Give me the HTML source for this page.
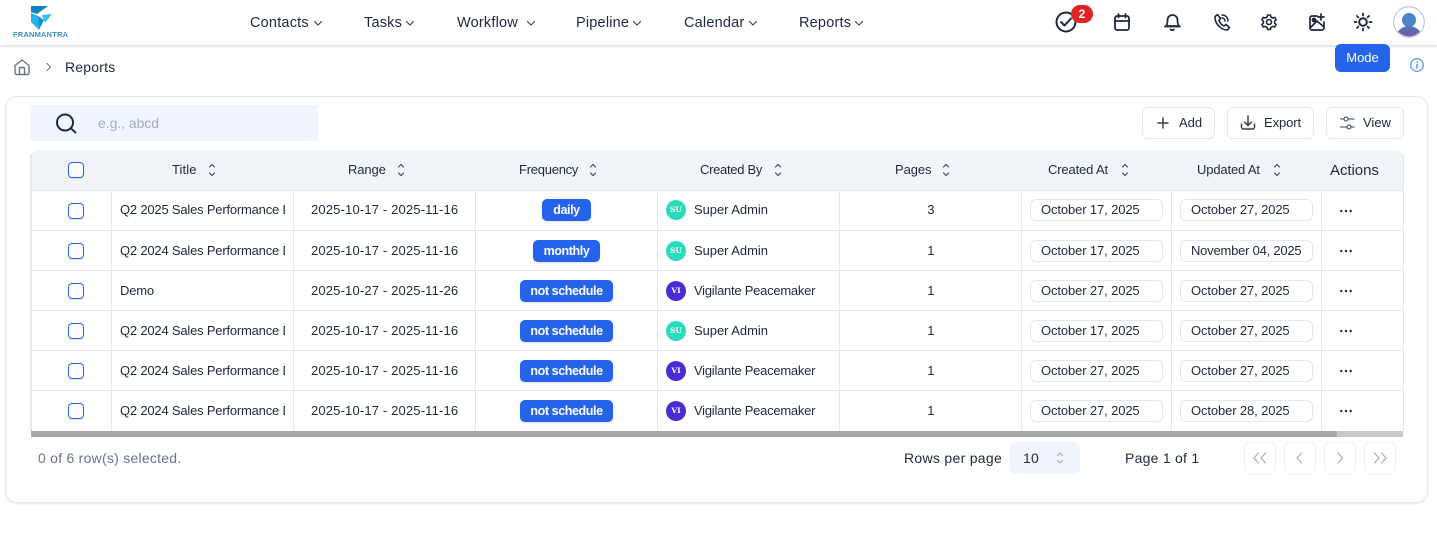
<!DOCTYPE html>
<html lang="en"><head><meta charset="utf-8"><title>Reports</title>
<style>
*{box-sizing:border-box}
html,body{margin:0;padding:0;width:1437px;height:540px;overflow:hidden;background:#fff;font-family:"Liberation Sans",sans-serif;color:#1e293b}
.a{position:absolute}
.t{position:absolute;white-space:nowrap;height:20px;line-height:20px;font-size:13px;letter-spacing:.16px}
.c{transform:translateX(-50%)}
.n{font-size:14.5px;letter-spacing:.2px;top:12.500px}
.h{letter-spacing:-.1px;top:160px}
.hl{background:#e2e8f0;position:absolute}
.cb{position:absolute;left:68px;width:16px;height:16px;border:1.5px solid #2563eb;border-radius:4px;background:#fff;box-shadow:0 1px 1px rgba(0,0,0,.1)}
.tt{left:120px;width:165px;overflow:hidden;letter-spacing:-.2px}
.sa{left:694px;letter-spacing:-.05px}
.vp{left:694px;letter-spacing:-.25px}
.bd{position:absolute;height:22px;line-height:22px;background:#2563eb;color:#fff;border-radius:5px;font-size:12.5px;letter-spacing:-.4px;font-weight:bold;text-align:center;box-shadow:0 1px 2px rgba(0,0,0,.12)}
.av{position:absolute;left:666px;width:20px;height:20px;border-radius:50%;color:#fff;font:bold 7.500px/20px "DejaVu Serif",serif;text-align:center}
.su{background:#2adbbb}.vi{background:#4c2bd5}
.dt{position:absolute;width:133px;height:22px;border:1px solid #e2e8f0;border-radius:6px;line-height:20px;padding-left:10px;font-size:13px;letter-spacing:-.12px;background:#fff;white-space:nowrap}
.d1{left:1030px}.d2{left:1180px}
.btn{position:absolute;top:107px;height:32px;border:1px solid #e2e8f0;border-radius:6px;background:#fff;box-shadow:0 1px 1px rgba(0,0,0,.03)}
.pg{position:absolute;top:442px;width:32px;height:32px;border:1px solid #eef1f6;border-radius:6px;background:#fff}
svg{position:absolute;overflow:visible}
.ic{fill:none;stroke:#1e293b;stroke-width:1.8;stroke-linecap:round;stroke-linejoin:round}
.g{fill:none;stroke:#a3adba;stroke-width:1.2;stroke-linecap:round;stroke-linejoin:round}
.s{fill:none;stroke:#334155;stroke-width:1.1;stroke-linecap:round;stroke-linejoin:round}
</style></head><body>

<!-- header -->
<div class="a" style="left:0;top:0;width:1437px;height:45px;background:#fff;box-shadow:0 1px 3px rgba(30,41,59,.22)"></div>
<svg style="left:0;top:0" width="80" height="45">
<polygon points="31,6 48,6 37,14 31,12" fill="#1183c4"/>
<polygon points="31,13 38,16 39,30 31,22" fill="#22b4ec"/>
<polygon points="38,16 44,20 39,30" fill="#0f8fd0"/>
<polygon points="42,15 52,14 45,23" fill="#34c3f0"/>
<text x="13" y="37" font-family="Liberation Sans" font-weight="bold" font-size="7.500" fill="#3a8fc4" textLength="55">FRANMANTRA</text>
</svg>
<div class="t n" style="left:250px">Contacts</div>
<div class="t n" style="left:364px">Tasks</div>
<div class="t n" style="left:457px">Workflow</div>
<div class="t n" style="left:576px">Pipeline</div>
<div class="t n" style="left:684px">Calendar</div>
<div class="t n" style="left:799px">Reports</div>
<svg style="left:0;top:0" width="900" height="45" class="s">
<path d="M314.500 21.500l3.500 3.500 3.500-3.500M406.500 21.500l3.500 3.500 3.500-3.500M527.500 21.500l3.500 3.500 3.500-3.500M633.500 21.500l3.500 3.500 3.500-3.500M749.500 21.500l3.500 3.500 3.500-3.500M855.500 21.500l3.500 3.500 3.500-3.500"/>
</svg>

<!-- header icons -->
<svg style="left:0;top:0" width="1437" height="80" class="ic">
<circle cx="1066" cy="22" r="9.500" stroke-width="2"/>
<path d="M1061 22l3.500 3.500 6.500-7" stroke-width="2"/>
<rect x="1115" y="16" width="14" height="14" rx="2"/><path d="M1115 21h14M1118.500 14v3.500M1125.500 14v3.500"/>
<path d="M1166 26c1.200-1.500 1.500-2.500 1.500-6a5 5 0 0 1 10 0c0 3.500.3 4.500 1.500 6zM1165 26.500h15M1170.500 29.500c.8 1 2.700 1 3.500 0"/>
<path d="M1215 16.500l2.500-2 3 4-1.500 2c.8 2.500 2.700 4.500 5 5.500l2-1.500 3.500 3-2 2.500c-6.500 0-13-6.500-12.500-13.500z" stroke-width="1.600"/><path d="M1222 15c3.500 0 6 2.500 6 6M1222 18c1.800 0 3 1.300 3 3" stroke-width="1.500"/>
<path d="M1267.600 15h2.800l.5 2 1.800 1 2-.6 1.400 2.400-1.500 1.400v2l1.500 1.400-1.400 2.400-2-.6-1.800 1-.5 2h-2.800l-.5-2-1.800-1-2 .6-1.400-2.400 1.500-1.400v-2l-1.500-1.400 1.400-2.400 2 .6 1.800-1z" stroke-width="1.600"/><circle cx="1269" cy="22" r="2.500" stroke-width="1.600"/>
<path d="M1317 16h-5a2 2 0 0 0-2 2v10a2 2 0 0 0 2 2h10a2 2 0 0 0 2-2v-6M1310 28l7-7 7 6M1321 14v6M1318 17h6" stroke-width="1.700"/><circle cx="1314" cy="20" r="1.500" fill="#1e293b"/>
<circle cx="1363" cy="22" r="3.800" stroke-width="2"/><path d="M1363 13.500v2M1363 28.500v2M1354.500 22h2M1369.500 22h2M1357 16l1.400 1.400M1367.600 26.600l1.400 1.400M1357 28l1.400-1.400M1367.600 17.400l1.400-1.400"/>
</svg>
<div class="a" style="left:1071px;top:5px;width:22px;height:18px;border-radius:9px;background:#e02424;color:#fff;font-size:12px;font-weight:bold;text-align:center;line-height:18px">2</div>
<svg style="left:1393px;top:6px" width="32" height="32">
<defs><linearGradient id="gr" x1="0" y1="0" x2="0" y2="1"><stop offset="0" stop-color="#5a6fb8"/><stop offset=".5" stop-color="#7b52a0"/></linearGradient>
<clipPath id="cp"><circle cx="16" cy="16" r="14.500"/></clipPath></defs>
<circle cx="16" cy="16" r="15.300" fill="#fff" stroke="#a9bfe6" stroke-width="1"/>
<g clip-path="url(#cp)"><ellipse cx="16" cy="34" rx="14" ry="14" fill="url(#gr)"/><circle cx="16" cy="14" r="7" fill="#4a84c9"/></g>
</svg>
<div class="a" style="left:1335px;top:44px;width:55px;height:28px;background:#2563eb;border-radius:6px;color:#fff;font-size:13px;text-align:center;line-height:28px">Mode</div>
<svg style="left:1410px;top:58px" width="14" height="14" fill="none" stroke="#5b9bf5" stroke-width="1.300"><circle cx="7" cy="7" r="6.300"/><path d="M7 6.500v3.500M7 4v.3" stroke-linecap="round" stroke-width="1.600"/></svg>

<!-- breadcrumb -->
<svg style="left:14px;top:59px" width="16" height="16" fill="none" stroke="#64748b" stroke-width="1.400" stroke-linejoin="round"><path d="M1 6.500L8 1l7 5.500V14a1.500 1.500 0 0 1-1.500 1.500h-11A1.500 1.500 0 0 1 1 14z"/><path d="M5.500 15.500V9.500a1 1 0 0 1 1-1h3a1 1 0 0 1 1 1v6"/></svg>
<svg style="left:45px;top:62px" width="8" height="10" fill="none" stroke="#64748b" stroke-width="1"><path d="M1.500 1l4 4-4 4"/></svg>
<div class="t" style="left:65px;top:57px;font-size:14px;letter-spacing:.2px">Reports</div>

<!-- card -->
<div class="a" style="left:5px;top:96px;width:1423px;height:407px;border:1px solid #e2e8f0;border-radius:12px;background:#fff;box-shadow:0 1px 2px rgba(30,41,59,.1)"></div>

<!-- search -->
<div class="a" style="left:30px;top:105px;width:288px;height:36px;background:#f1f5fd"></div>
<svg style="left:55px;top:112px" width="22" height="22" fill="none" stroke="#1e293b" stroke-width="2" stroke-linecap="round"><circle cx="10" cy="10.500" r="8"/><path d="M16 16.500l4.500 4"/></svg>
<div class="t" style="left:98px;top:113px;font-size:14px;letter-spacing:-.05px;color:#a0aec0">e.g., abcd</div>

<!-- buttons -->
<div class="btn" style="left:1142px;width:73px"></div>
<div class="btn" style="left:1227px;width:87px"></div>
<div class="btn" style="left:1326px;width:78px"></div>
<svg style="left:0;top:0" width="1437" height="140" fill="none" stroke="#334155" stroke-width="1.500" stroke-linecap="round" stroke-linejoin="round">
<path d="M1163 118v10M1158 123h10"/>
<path d="M1248 116v9M1244.500 122l3.500 3.500 3.500-3.500M1241.500 124v3a2 2 0 0 0 2 2h9a2 2 0 0 0 2-2v-3"/>
<g stroke-width="1.100"><path d="M1340.500 119h3M1349 119h5M1340.500 127h6M1352 127h2"/><circle cx="1346" cy="119" r="2"/><circle cx="1349" cy="127" r="2"/></g>
</svg>
<div class="t" style="left:1179px;top:113px;letter-spacing:0">Add</div>
<div class="t" style="left:1264px;top:113px;letter-spacing:-.1px">Export</div>
<div class="t" style="left:1363px;top:113px;letter-spacing:0">View</div>

<!-- table frame -->
<div class="a" style="left:30px;top:150px;width:1374px;height:41px;background:#f1f4f9;border-radius:8px 8px 0 0"></div>
<div class="hl" style="left:30px;top:154px;width:2px;height:277px"></div>
<div class="hl" style="left:1403px;top:154px;width:1px;height:277px"></div>
<div class="hl" style="left:31px;top:190px;width:1372px;height:1px"></div>
<div class="hl" style="left:31px;top:230px;width:1372px;height:1px"></div>
<div class="hl" style="left:31px;top:270px;width:1372px;height:1px"></div>
<div class="hl" style="left:31px;top:310px;width:1372px;height:1px"></div>
<div class="hl" style="left:31px;top:350px;width:1372px;height:1px"></div>
<div class="hl" style="left:31px;top:390px;width:1372px;height:1px"></div>
<div class="hl" style="left:111px;top:191px;width:1px;height:240px"></div>
<div class="hl" style="left:293px;top:191px;width:1px;height:240px"></div>
<div class="hl" style="left:475px;top:191px;width:1px;height:240px"></div>
<div class="hl" style="left:657px;top:191px;width:1px;height:240px"></div>
<div class="hl" style="left:839px;top:191px;width:1px;height:240px"></div>
<div class="hl" style="left:1021px;top:191px;width:1px;height:240px"></div>
<div class="hl" style="left:1171px;top:191px;width:1px;height:240px"></div>
<div class="hl" style="left:1321px;top:191px;width:1px;height:240px"></div>
<div class="a" style="left:31px;top:431px;width:1372px;height:6px;background:#c8c8c8"></div>
<div class="a" style="left:31px;top:431px;width:1306px;height:6px;background:#a8a8a8"></div>

<!-- header row -->
<div class="cb" style="top:162px"></div>
<div class="t h" style="left:172px;letter-spacing:.1px">Title</div>
<div class="t h" style="left:348px">Range</div>
<div class="t h" style="left:519px;letter-spacing:-.25px">Frequency</div>
<div class="t h" style="left:700px;letter-spacing:-.3px">Created By</div>
<div class="t h" style="left:895px">Pages</div>
<div class="t h" style="left:1048px;letter-spacing:-.15px">Created At</div>
<div class="t h" style="left:1197px;letter-spacing:-.15px">Updated At</div>
<div class="t" style="left:1330px;top:160.500px;font-size:15px;letter-spacing:-.05px">Actions</div>
<svg style="left:0;top:160px" width="1437" height="20" class="s">
<path d="M209.500 7l2.500-2.500 2.500 2.500M209.500 13l2.500 2.500 2.500-2.500"/>
<path d="M398.500 7l2.500-2.500 2.500 2.500M398.500 13l2.500 2.500 2.500-2.500"/>
<path d="M590.500 7l2.500-2.500 2.500 2.500M590.500 13l2.500 2.500 2.500-2.500"/>
<path d="M775.500 7l2.500-2.500 2.500 2.500M775.500 13l2.500 2.500 2.500-2.500"/>
<path d="M943.500 7l2.500-2.500 2.500 2.500M943.500 13l2.500 2.500 2.500-2.500"/>
<path d="M1122.500 7l2.500-2.500 2.500 2.500M1122.500 13l2.500 2.500 2.500-2.500"/>
<path d="M1274.500 7l2.500-2.500 2.500 2.500M1274.500 13l2.500 2.500 2.500-2.500"/>
</svg>

<!-- row 1 -->
<div class="cb" style="top:203px"></div>
<div class="t tt" style="top:200px">Q2 2025 Sales Performance Dashboard</div>
<div class="t" style="left:311px;top:200px">2025-10-17 - 2025-11-16</div>
<div class="bd" style="left:542px;top:199px;width:49px">daily</div>
<div class="av su" style="top:200px">SU</div>
<div class="t sa" style="top:200px">Super Admin</div>
<div class="t c" style="left:931px;top:200px">3</div>
<div class="dt d1" style="top:199px">October 17, 2025</div>
<div class="dt d2" style="top:199px">October 27, 2025</div>

<!-- row 2 -->
<div class="cb" style="top:243px"></div>
<div class="t tt" style="top:241px">Q2 2024 Sales Performance Dashboard</div>
<div class="t" style="left:311px;top:241px">2025-10-17 - 2025-11-16</div>
<div class="bd" style="left:533px;top:240px;width:67px">monthly</div>
<div class="av su" style="top:241px">SU</div>
<div class="t sa" style="top:241px">Super Admin</div>
<div class="t c" style="left:931px;top:241px">1</div>
<div class="dt d1" style="top:240px">October 17, 2025</div>
<div class="dt d2" style="top:240px;letter-spacing:-.22px">November 04, 2025</div>

<!-- row 3 -->
<div class="cb" style="top:283px"></div>
<div class="t tt" style="top:281px">Demo</div>
<div class="t" style="left:311px;top:281px">2025-10-27 - 2025-11-26</div>
<div class="bd" style="left:520px;top:280px;width:93px">not schedule</div>
<div class="av vi" style="top:281px">VI</div>
<div class="t vp" style="top:281px">Vigilante Peacemaker</div>
<div class="t c" style="left:931px;top:281px">1</div>
<div class="dt d1" style="top:280px">October 27, 2025</div>
<div class="dt d2" style="top:280px">October 27, 2025</div>

<!-- row 4 -->
<div class="cb" style="top:323px"></div>
<div class="t tt" style="top:321px">Q2 2024 Sales Performance Dashboard</div>
<div class="t" style="left:311px;top:321px">2025-10-17 - 2025-11-16</div>
<div class="bd" style="left:520px;top:320px;width:93px">not schedule</div>
<div class="av su" style="top:321px">SU</div>
<div class="t sa" style="top:321px">Super Admin</div>
<div class="t c" style="left:931px;top:321px">1</div>
<div class="dt d1" style="top:320px">October 17, 2025</div>
<div class="dt d2" style="top:320px">October 27, 2025</div>

<!-- row 5 -->
<div class="cb" style="top:363px"></div>
<div class="t tt" style="top:361px">Q2 2024 Sales Performance Dashboard</div>
<div class="t" style="left:311px;top:361px">2025-10-17 - 2025-11-16</div>
<div class="bd" style="left:520px;top:360px;width:93px">not schedule</div>
<div class="av vi" style="top:361px">VI</div>
<div class="t vp" style="top:361px">Vigilante Peacemaker</div>
<div class="t c" style="left:931px;top:361px">1</div>
<div class="dt d1" style="top:360px">October 27, 2025</div>
<div class="dt d2" style="top:360px">October 27, 2025</div>

<!-- row 6 -->
<div class="cb" style="top:403px"></div>
<div class="t tt" style="top:401px">Q2 2024 Sales Performance Dashboard</div>
<div class="t" style="left:311px;top:401px">2025-10-17 - 2025-11-16</div>
<div class="bd" style="left:520px;top:400px;width:93px">not schedule</div>
<div class="av vi" style="top:401px">VI</div>
<div class="t vp" style="top:401px">Vigilante Peacemaker</div>
<div class="t c" style="left:931px;top:401px">1</div>
<div class="dt d1" style="top:400px">October 27, 2025</div>
<div class="dt d2" style="top:400px">October 28, 2025</div>

<!-- action dots -->
<svg style="left:1340px;top:0" width="12" height="420" fill="#1e293b">
<g><circle cx="1.300" cy="211" r="1.200"/><circle cx="6" cy="211" r="1.200"/><circle cx="10.700" cy="211" r="1.200"/></g>
<g><circle cx="1.300" cy="251" r="1.200"/><circle cx="6" cy="251" r="1.200"/><circle cx="10.700" cy="251" r="1.200"/></g>
<g><circle cx="1.300" cy="291" r="1.200"/><circle cx="6" cy="291" r="1.200"/><circle cx="10.700" cy="291" r="1.200"/></g>
<g><circle cx="1.300" cy="331" r="1.200"/><circle cx="6" cy="331" r="1.200"/><circle cx="10.700" cy="331" r="1.200"/></g>
<g><circle cx="1.300" cy="371" r="1.200"/><circle cx="6" cy="371" r="1.200"/><circle cx="10.700" cy="371" r="1.200"/></g>
<g><circle cx="1.300" cy="411" r="1.200"/><circle cx="6" cy="411" r="1.200"/><circle cx="10.700" cy="411" r="1.200"/></g>
</svg>

<!-- footer -->
<div class="t" style="left:38px;top:448px;font-size:14px;letter-spacing:.25px;color:#64748b">0 of 6 row(s) selected.</div>
<div class="t" style="left:904px;top:448px;font-size:14px;letter-spacing:.3px">Rows per page</div>
<div class="a" style="left:1010px;top:442px;width:70px;height:32px;background:#f1f5fd;border-radius:6px"></div>
<div class="t" style="left:1023px;top:448px;font-size:14px">10</div>
<svg style="left:0;top:440px" width="1437" height="36" class="g">
<path d="M1057.500 15.500l2.500-2.500 2.500 2.500M1057.500 20.500l2.500 2.500 2.500-2.500"/>
</svg>
<div class="t" style="left:1125px;top:448px;font-size:14px;letter-spacing:.25px">Page 1 of 1</div>
<div class="pg" style="left:1244px"></div>
<div class="pg" style="left:1284px"></div>
<div class="pg" style="left:1324px"></div>
<div class="pg" style="left:1364px"></div>
<svg style="left:0;top:440px" width="1437" height="36" class="g">
<path d="M1258.500 13l-4.500 5 4.500 5M1265.500 13l-4.500 5 4.500 5"/>
<path d="M1301.500 13l-4.500 5 4.500 5"/>
<path d="M1338 13l4.500 5-4.500 5"/>
<path d="M1374.500 13l4.500 5-4.500 5M1381.500 13l4.500 5-4.500 5"/>
</svg>
</body></html>
